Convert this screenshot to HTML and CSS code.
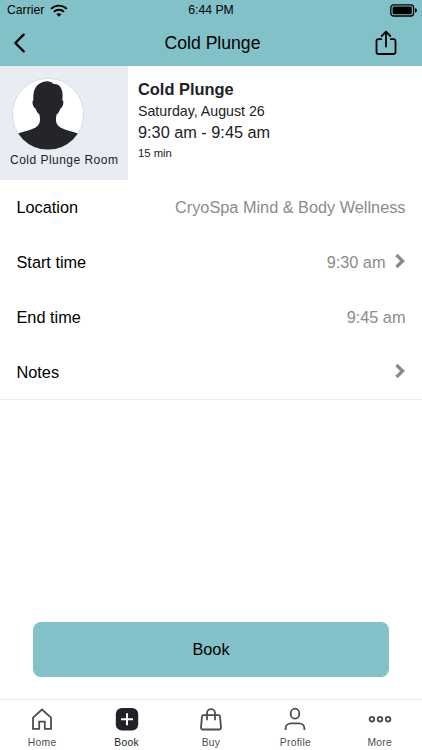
FILE: index.html
```html
<!DOCTYPE html>
<html lang="en">
<head>
<meta charset="utf-8">
<title>Cold Plunge</title>
<link rel="stylesheet" href="styles.css">
</head>
<body>
<div class="screen">
  <header class="header">
    <div class="status">
      <div class="carrier"><span>Carrier</span>
        <svg width="18" height="13" viewBox="0 0 18 13" fill="none" stroke="#000" stroke-width="1.9"><path d="M1 4.9C5.4.5 12.4.5 16.8 4.9M3.8 7.9C6.7 5 11.1 5 14 7.9"/><path d="M6.4 10.2c1.4-1.4 3.6-1.4 5 0L8.9 12.7z" fill="#000" stroke="none"/></svg>
      </div>
      <span class="clock">6:44 PM</span>
      <svg class="battery" width="28" height="13" viewBox="0 0 28 13"><rect x=".8" y=".8" width="22.8" height="11.2" rx="2.8" fill="none" stroke="#000" stroke-width="1.3"/><rect x="2.6" y="2.6" width="19.2" height="7.6" rx="1.3"/><path d="M25 4.2c2.6.5 2.6 3.9 0 4.4z"/></svg>
    </div>
    <div class="nav">
      <svg width="14" height="22" viewBox="0 0 14 22" fill="none" stroke="#000" stroke-width="2.3" stroke-linecap="round" stroke-linejoin="round"><path d="M10.7 2.6 2.3 11l8.4 8.4"/></svg>
      <h1>Cold Plunge</h1>
      <svg width="22" height="26" viewBox="0 0 22 26" fill="none" stroke="#000" stroke-width="1.8" stroke-linecap="round" stroke-linejoin="round"><path d="M6.3 9.1H3.6a2.1 2.1 0 0 0-2.1 2.1v10.7A2.1 2.1 0 0 0 3.6 24h14.8a2.1 2.1 0 0 0 2.1-2.1V11.2a2.1 2.1 0 0 0-2.1-2.1H15.7M11 16.5V2M6.7 6 11 1.7 15.300 6"/></svg>
    </div>
  </header>
  <section class="summary">
    <div class="room">
      <svg class="avatar" width="72" height="72" viewBox="0 0 72 72"><defs><clipPath id="disc"><circle cx="36" cy="36" r="35.6"/></clipPath></defs><circle cx="36" cy="36" r="35.6" fill="#fff" stroke="#cfd1d4" stroke-width=".7"/><path clip-path="url(#disc)" fill="#232529" d="M0 58.500C7 53.500 20 53 25.500 48c3-3 2.800-7 1.900-11.500C25.500 35 24.300 33 23.800 30.700c-3-1.500-4.200-7-2.400-9C20.800 12 24 6 31 4c4-1.200 8-.8 10.500 2 4.500-.8 7.800 2.500 8.700 7.500.6 3 .4 5.500.1 8.200 2.200 2 .8 7.500-2.100 9-.6 2.500-1.600 4.400-3.600 5.800-.9 4.500-1.100 8.500 1.900 11.500 5.500 5 18.500 5.500 25.500 10.500V72H0z"/></svg>
      <span>Cold Plunge Room</span>
    </div>
    <div class="details">
      <h2>Cold Plunge</h2>
      <p class="date">Saturday, August 26</p>
      <p class="time">9:30 am - 9:45 am</p>
      <p class="duration">15 min</p>
    </div>
  </section>
  <section class="fields">
    <div class="row"><span>Location</span><span class="value">CryoSpa Mind &amp; Body Wellness</span></div>
    <div class="row"><span>Start time</span><span class="value">9:30 am<svg class="chevron" width="11" height="16" viewBox="0 0 11 16"><path d="m1.500 2 6 6-6 6"/></svg></span></div>
    <div class="row"><span>End time</span><span class="value">9:45 am</span></div>
    <div class="row"><span>Notes</span><span class="value"><svg class="chevron" width="11" height="16" viewBox="0 0 11 16"><path d="m1.500 2 6 6-6 6"/></svg></span></div>
  </section>
  <button class="book">Book</button>
  <nav class="tabs">
    <div class="tab"><svg width="24" height="24" viewBox="0 0 24 24"><path d="M3 10.600 12 2.500l9 8.100v11.300h-6.200v-7.300H9.200v7.300H3z"/></svg><span>Home</span></div>
    <div class="tab active"><svg width="24" height="24" viewBox="0 0 24 24"><rect x=".8" y="1" width="22.400" height="22.400" rx="6" fill="#202228" stroke="none"/><path d="M12 6.200v12M6 12.200h12" stroke="#fff" stroke-width="2"/></svg><span>Book</span></div>
    <div class="tab"><svg width="24" height="24" viewBox="0 0 24 24"><path d="M4.300 8.200h15.400q1.100 0 1.300 1.100l1 11q.1 2.200-2 2.200H4q-2.100 0-2-2.200l1-11q.2-1.100 1.300-1.100zM8 12.500V6.100a4 4 0 0 1 8 0v6.400" stroke-linecap="round"/></svg><span>Buy</span></div>
    <div class="tab"><svg width="24" height="24" viewBox="0 0 24 24"><ellipse cx="12" cy="6.700" rx="4.300" ry="5"/><path d="M2.600 23v-1.500c0-3 2.500-5.200 5.500-5.200h7.800c3 0 5.500 2.200 5.500 5.200V23"/></svg><span>Profile</span></div>
    <div class="tab"><svg width="24" height="24" viewBox="0 0 24 24"><circle cx="3.900" cy="12.200" r="2.300"/><circle cx="12" cy="12.200" r="2.300"/><circle cx="20.100" cy="12.200" r="2.300"/></svg><span>More</span></div>
  </nav>
</div>
</body>
</html>
```
FILE: styles.css
```css
* { box-sizing: border-box; }
body { margin: 0; background: #fff; font-family: "Liberation Sans", Arial, sans-serif; }
h1, h2, p { margin: 0; }
svg { display: block; flex: none; }

.screen { width: 422px; height: 750px; display: flex; flex-direction: column; color: #000; font-size: 16.3px; }

.header { height: 66.4px; background: #82c1c8; }
.status { height: 20px; display: grid; grid-template-columns: 1fr auto 1fr; align-items: center; padding: 0 4px 0 7px; font-size: 12.2px; line-height: 20px; }
.clock { margin-right: 3px; }
.carrier { display: flex; align-items: center; gap: 6px; }
.battery { justify-self: end; }
.nav { height: 46px; display: grid; grid-template-columns: 1fr auto 1fr; align-items: center; padding: 0 25px 0 13px; }
.nav h1 { font-size: 17.6px; font-weight: 400; padding-left: 15px; }
.nav svg:last-child { justify-self: end; }

.summary { height: 113.6px; display: flex; color: #202228; }
.room { width: 128px; background: #e9ecf2; padding: 11.6px 0 0 10px; font-size: 12px; letter-spacing: .48px; line-height: 21px; white-space: nowrap; }
.avatar { margin-left: 2px; }
.details { padding: 11.6px 0 0 10px; }
.details h2 { font-size: 16.4px; line-height: 22px; }
.date { font-size: 14.2px; line-height: 22px; }
.time { line-height: 21px; }
.duration { font-size: 11.3px; line-height: 20px; }

.fields { height: 220px; border-bottom: 1px solid #eee; }
.row { height: 55px; display: flex; align-items: center; justify-content: space-between; padding: 0 16.5px; }
.value { display: flex; align-items: center; color: #8b8b8b; }
.chevron { margin: -2px 0 0 9px; fill: none; stroke: #8b8b8b; stroke-width: 3.4; }

.book { margin: auto 33px 22px; height: 55px; border: 0; border-radius: 8px; background: #82c1c8; color: #000; font: inherit; }

.tabs { height: 51px; display: grid; grid-template-columns: repeat(5, 1fr); border-top: 1px solid #eee; }
.tab { display: flex; flex-direction: column; align-items: center; padding-top: 7px; color: #4b4d53; font-size: 10.3px; letter-spacing: .3px; line-height: 24px; }
.tab svg { fill: none; stroke: currentColor; stroke-width: 1.8; }
.active { color: #202228; }
```
